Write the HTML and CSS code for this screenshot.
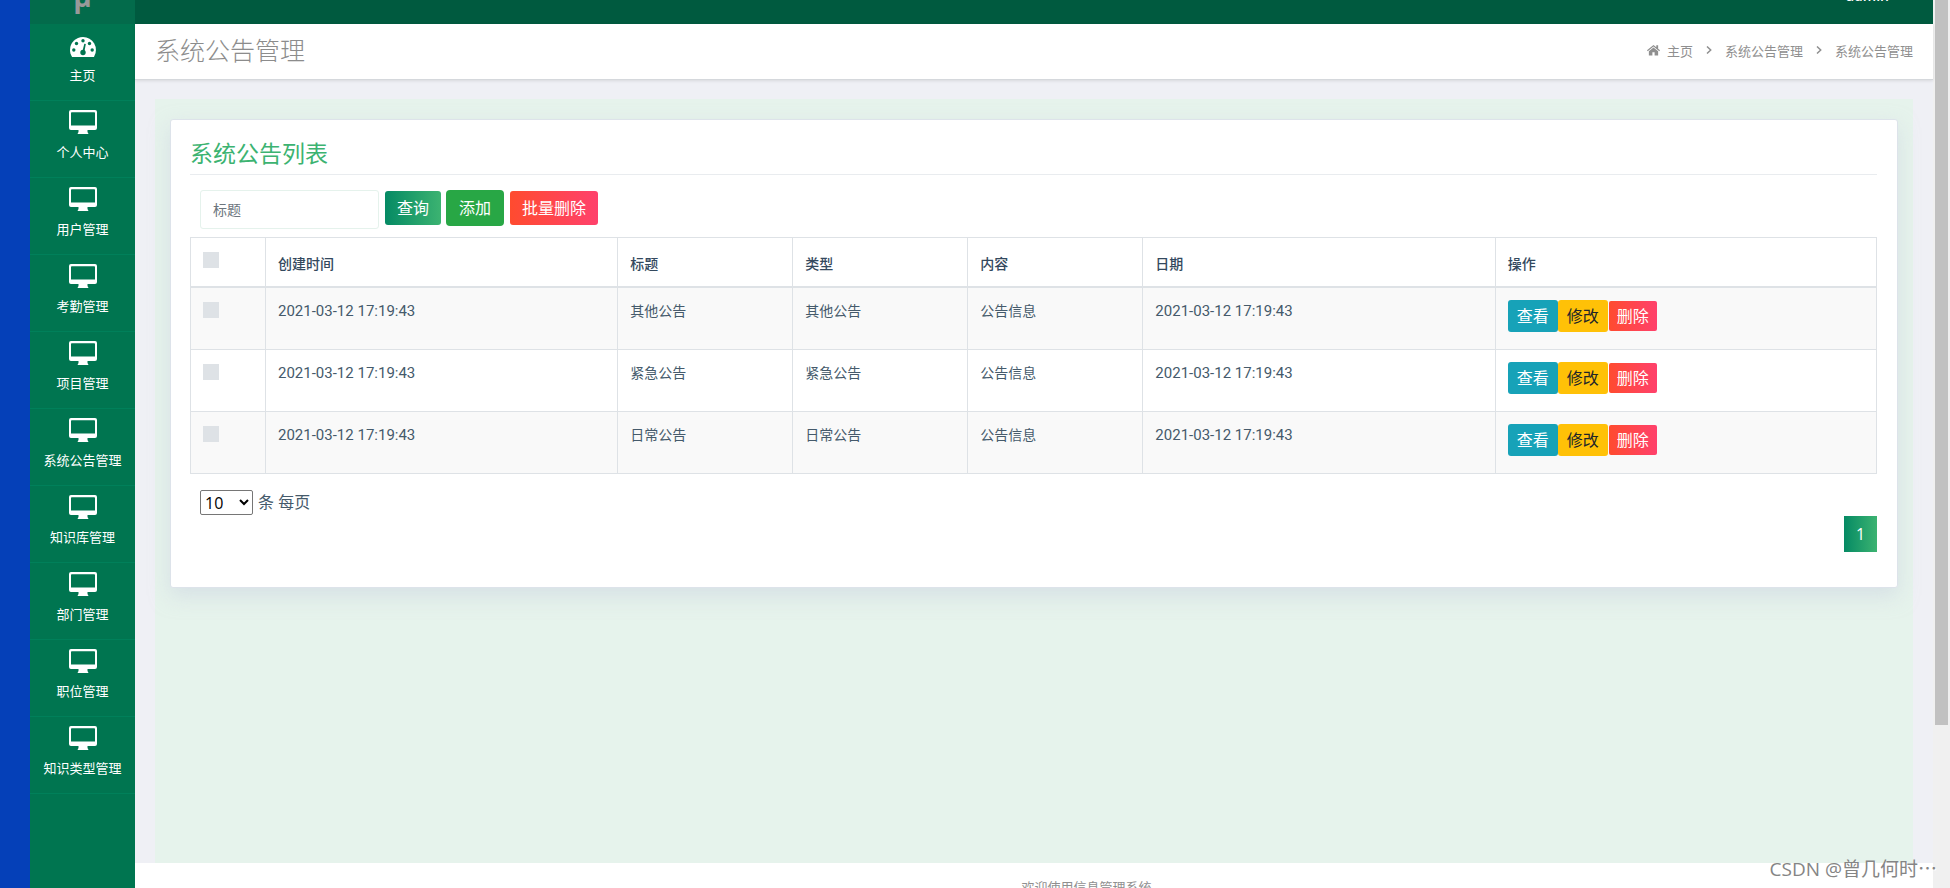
FILE: index.html
```html
<!DOCTYPE html>
<html lang="zh-CN">
<head>
<meta charset="utf-8">
<title>系统公告管理</title>
<link rel="stylesheet" href="styles.css">
</head>
<body>
<svg class="defs" aria-hidden="true">
  <symbol id="monitor" viewBox="0 0 28 28">
    <path fill-rule="evenodd" d="M2 2h24a2 2 0 0 1 2 2v16a2 2 0 0 1-2 2h-7.500v2l1 2H8.500l1-2v-2H2a2 2 0 0 1-2-2V4a2 2 0 0 1 2-2zm.8 2.200a.8.800 0 0 0-.8.800v12.500h24V5a.8.800 0 0 0-.8-.8z"/>
  </symbol>
  <symbol id="gauge" viewBox="0 0 28 28">
    <path d="M14 6a13 13 0 0 0-13 13c0 2.500.7 4.800 1.800 6.500.3.400.6.500 1 .500h20.400c.4 0 .7-.1 1-.5A13 13 0 0 0 14 6z"/>
    <g class="cut"><circle cx="4.800" cy="19" r="1.700"/><circle cx="7.500" cy="12.500" r="1.700"/><circle cx="14" cy="9.700" r="1.700"/><circle cx="20.500" cy="12.500" r="1.700"/><circle cx="23.200" cy="19" r="1.700"/><circle cx="14" cy="21.500" r="2.700"/><path d="M13.300 21l2-8.200 1.500.3-1.600 8.400z"/></g>
  </symbol>
</svg>
<div class="shell">
  <nav class="sidebar">
    <div class="brand">µ</div>
    <a class="item" href="#"><svg><use href="#gauge"/></svg>主页</a>
    <a class="item" href="#"><svg><use href="#monitor"/></svg>个人中心</a>
    <a class="item" href="#"><svg><use href="#monitor"/></svg>用户管理</a>
    <a class="item" href="#"><svg><use href="#monitor"/></svg>考勤管理</a>
    <a class="item" href="#"><svg><use href="#monitor"/></svg>项目管理</a>
    <a class="item" href="#"><svg><use href="#monitor"/></svg>系统公告管理</a>
    <a class="item" href="#"><svg><use href="#monitor"/></svg>知识库管理</a>
    <a class="item" href="#"><svg><use href="#monitor"/></svg>部门管理</a>
    <a class="item" href="#"><svg><use href="#monitor"/></svg>职位管理</a>
    <a class="item" href="#"><svg><use href="#monitor"/></svg>知识类型管理</a>
  </nav>
  <div class="main">
    <div class="topbar">admin</div>
    <header class="page-head">
      <h1>系统公告管理</h1>
      <nav class="crumbs">
        <a href="#"><svg class="home" viewBox="0 0 14 12"><path d="M7 .5 0 6.400l.8.900L7 2.200l6.200 5.100.8-.9-2-1.700V1h-2v2z"/><path d="M7 3.200 2 7.300V12h3.800V8.500h2.400V12H12V7.300z"/></svg>主页</a>
        <svg class="chev" viewBox="0 0 6 8"><path d="M1 .5 4.700 4 1 7.500"/></svg>
        <a href="#">系统公告管理</a>
        <svg class="chev" viewBox="0 0 6 8"><path d="M1 .5 4.700 4 1 7.500"/></svg>
        <span>系统公告管理</span>
      </nav>
    </header>
    <main class="content">
      <div class="panel">
        <section class="card">
          <h2>系统公告列表</h2>
          <form class="tools">
            <input class="search" type="text" placeholder="标题" aria-label="标题">
            <button class="btn query" type="button">查询</button>
            <button class="btn add" type="button">添加</button>
            <button class="btn danger" type="button">批量删除</button>
          </form>
          <table class="grid">
            <colgroup><col class="c-check"><col class="c-time"><col class="c-text"><col class="c-text"><col class="c-text"><col class="c-time"><col class="c-ops"></colgroup>
            <thead>
              <tr><th class="pick"><input type="checkbox" aria-label="全选"></th><th>创建时间</th><th>标题</th><th>类型</th><th>内容</th><th>日期</th><th>操作</th></tr>
            </thead>
            <tbody>
              <tr><td class="pick"><input type="checkbox" aria-label="选择"></td><td class="date">2021-03-12 17:19:43</td><td>其他公告</td><td>其他公告</td><td>公告信息</td><td class="date">2021-03-12 17:19:43</td>
                <td><div class="ops"><button class="op view" type="button">查看</button><button class="op edit" type="button">修改</button><button class="op del" type="button">删除</button></div></td></tr>
              <tr><td class="pick"><input type="checkbox" aria-label="选择"></td><td class="date">2021-03-12 17:19:43</td><td>紧急公告</td><td>紧急公告</td><td>公告信息</td><td class="date">2021-03-12 17:19:43</td>
                <td><div class="ops"><button class="op view" type="button">查看</button><button class="op edit" type="button">修改</button><button class="op del" type="button">删除</button></div></td></tr>
              <tr><td class="pick"><input type="checkbox" aria-label="选择"></td><td class="date">2021-03-12 17:19:43</td><td>日常公告</td><td>日常公告</td><td>公告信息</td><td class="date">2021-03-12 17:19:43</td>
                <td><div class="ops"><button class="op view" type="button">查看</button><button class="op edit" type="button">修改</button><button class="op del" type="button">删除</button></div></td></tr>
            </tbody>
          </table>
          <div class="per-page">
            <select id="size"><option>10</option><option>20</option></select>
            <label for="size">条 每页</label>
          </div>
          <div class="pager"><button type="button">1</button></div>
        </section>
      </div>
    </main>
    <footer class="foot">欢迎使用信息管理系统</footer>
  </div>
  <div class="scroll"><div class="thumb"></div></div>
</div>
<div class="mark">CSDN @曾几何时⋯</div>
</body>
</html>
```

FILE: styles.css
```css
* { box-sizing: border-box; }
body {
  margin: 0;
  height: 100vh;
  overflow: hidden;
  background: #0540b8;
  font-family: "Open Sans", "Noto Sans CJK SC", sans-serif;
  font-size: 14px;
  color: #455a6b;
}
a { color: inherit; text-decoration: none; }
button, input, select { font-family: inherit; }
.defs { display: none; }

/* the page is shown scrolled 40px down */
.shell {
  display: flex;
  margin-top: -40px;
  height: calc(100vh + 40px);
  padding-left: 30px;
}

.sidebar { width: 105px; flex: none; background: #007550; color: #fff; }
.brand {
  height: 64px;
  padding-top: 10px;
  background: #036b4b;
  color: #999;
  font-size: 28px;
  font-weight: 700;
  line-height: 52px;
  text-align: center;
}
.item {
  display: flex;
  flex-direction: column;
  align-items: center;
  height: 77px;
  padding-top: 7px;
  border-bottom: 1px solid #00805a;
  font-size: 13px;
  line-height: 20px;
}
.item svg { width: 28px; height: 28px; margin-bottom: 6px; fill: #fff; }
.cut { fill: #007550; }

.main { flex: 1; display: flex; flex-direction: column; min-width: 0; background: #fff; }
.topbar {
  flex: none;
  height: 64px;
  padding: 8px 44px 0 0;
  background: #005a3f;
  color: #fff;
  font-size: 14px;
  font-weight: 600;
  line-height: 56px;
  text-align: right;
}
.page-head {
  flex: none;
  position: relative;
  display: flex;
  align-items: center;
  justify-content: space-between;
  height: 56px;
  padding: 0 20px 3px;
  border-bottom: 1px solid #d5d8dc;
  box-shadow: 0 1px 3px rgba(0, 0, 0, .1);
}
.page-head h1 { margin: 0; font-size: 25px; font-weight: 300; line-height: 36px; color: #8c8c8c; }
.crumbs { display: flex; align-items: center; gap: 13px; font-size: 13px; color: #8f8f8f; }
.crumbs a { display: flex; align-items: center; }
.home { width: 13px; height: 12px; margin-right: 7px; fill: #8f8f8f; }
.chev { width: 6px; height: 8px; fill: none; stroke: #8f8f8f; stroke-width: 1.500; }

.content { flex: none; height: calc(100vh - 105px); padding: 19px 20px 0; background: #eff0f5; }
.panel { height: 100%; padding: 20px 15px 0; background: #e6f3ec; }
.card {
  height: 469px;
  padding: 16px 20px 0 19px;
  border: 1px solid #dde3ea;
  border-radius: 3px;
  background: #fff;
  box-shadow: 0 8px 20px rgba(200, 208, 224, .5);
}
.card h2 {
  margin: 0;
  height: 39px;
  border-bottom: 1px solid #e9ecef;
  font-size: 23px;
  font-weight: 400;
  line-height: 34px;
  color: #3cb371;
}
.tools { display: flex; align-items: center; gap: 5px; height: 62px; padding: 6px 10px 0; }
.search {
  width: 179px;
  height: 39px;
  padding: 0 12px;
  border: 1px solid #e5f2ec;
  border-radius: 3px;
  background: #fff;
  font-size: 14px;
}
.search::placeholder { color: #6c757d; }
.search + .btn { margin-left: 1px; }
.btn {
  height: 34px;
  margin-bottom: 3px;
  padding: 0 12px;
  border: 0;
  border-radius: 3px;
  color: #fff;
  font-size: 16px;
  line-height: 34px;
}
.query { background: linear-gradient(90deg, #058a64, #3cb371); }
.add { height: 36px; padding: 0 13px; background: #28a745; border-radius: 4px; }
.danger { margin-left: 1px; background: linear-gradient(90deg, #ff4b2f, #ff416c); }

.grid { width: 100%; border-collapse: collapse; table-layout: fixed; }
.c-check { width: 75px; }
.c-time { width: 20.9%; }
.c-text { width: 175px; }
.grid th, .grid td {
  padding: 12px 12px 0;
  border: 1px solid #dee2e6;
  text-align: left;
  vertical-align: top;
  font-size: 14px;
  line-height: 22px;
}
.grid th { height: 49px; padding-top: 15px; border-bottom-width: 2px; font-weight: 500; color: #34495e; }
.grid td { height: 62px; }
.grid tbody tr:first-child td { height: 63px; }
.grid tbody tr:nth-child(odd) { background: #f9f9f9; }
.grid .date { font-family: Roboto, sans-serif; font-size: 15px; }
.grid .pick { padding-top: 14px; }
.pick input {
  appearance: none;
  display: block;
  width: 16px;
  height: 16px;
  margin: 0;
  background: #dee2e6;
}
.ops { display: flex; align-items: center; }
.op { height: 32px; padding: 0 9px; border: 0; border-radius: 3px; color: #fff; font-size: 16px; line-height: 30px; }
.view { background: #17a2b8; }
.edit { background: #ffc107; color: #212529; }
.del { height: 30px; margin-left: 1px; padding: 0 8px; border-radius: 2px; background: linear-gradient(90deg, #ff4b2f, #ff416c); }

.per-page { display: flex; align-items: center; gap: 5px; padding: 16px 10px 0; font-size: 16px; line-height: 25px; }
.per-page select { width: 53px; height: 25px; border: 1px solid #767676; border-radius: 2px; padding: 0; background: #fff; color: #000; font-size: 16px; }
.pager { display: flex; justify-content: flex-end; padding-top: 1px; }
.pager button { width: 33px; height: 36px; padding: 0; border: 0; background: linear-gradient(90deg, #058a64, #3cb371); color: #fff; font-size: 16px; }

.foot { padding: 14px 0 0 105px; font-size: 13px; line-height: 20px; text-align: center; color: #8f8f8f; }

.scroll { width: 17px; flex: none; padding: 40px 2px 0; background: #f0f0f0; }
.thumb { height: calc(82vh - 3px); background: #c1c1c1; }
.mark {
  position: absolute;
  right: 13px;
  bottom: 4px;
  font-family: "Open Sans", "Noto Sans CJK SC", sans-serif;
  font-size: 19px;
  line-height: 30px;
  color: #858585;
  text-shadow: 1px 1px 1px #fff;
}
```
